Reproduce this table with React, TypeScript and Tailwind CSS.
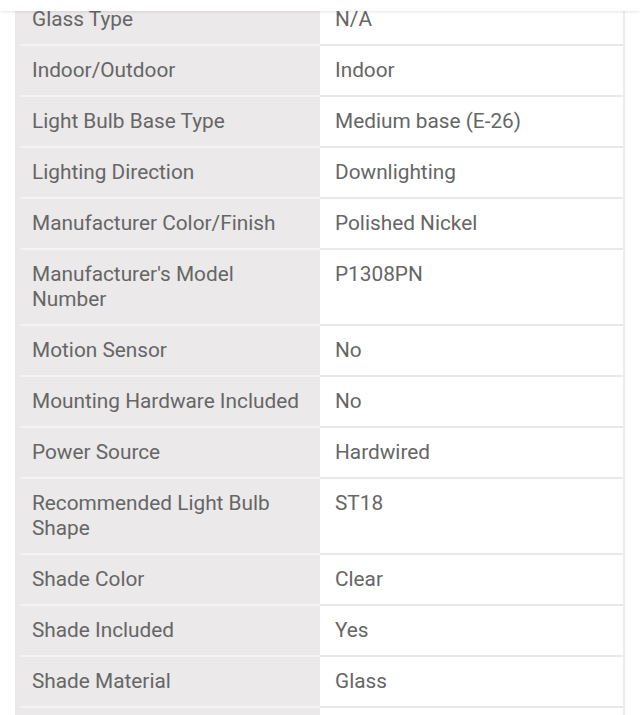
const SPECS: Array<[string, string]> = [
  ['Glass Type', 'N/A'],
  ['Indoor/Outdoor', 'Indoor'],
  ['Light Bulb Base Type', 'Medium base (E-26)'],
  ['Lighting Direction', 'Downlighting'],
  ['Manufacturer Color/Finish', 'Polished Nickel'],
  ["Manufacturer's Model Number", 'P1308PN'],
  ['Motion Sensor', 'No'],
  ['Mounting Hardware Included', 'No'],
  ['Power Source', 'Hardwired'],
  ['Recommended Light Bulb Shape', 'ST18'],
  ['Shade Color', 'Clear'],
  ['Shade Included', 'Yes'],
  ['Shade Material', 'Glass'],
  ['', ''],
]

export default function App() {
  return (
    <div className="relative h-[715px] overflow-hidden bg-white font-['Roboto','Liberation_Sans',sans-serif] text-[20.8px] leading-[25px] text-[#666666]">
      {/* top bar edge */}
      <div className="absolute inset-x-0 top-0 z-10 h-[11px] bg-white shadow-[0_1px_3px_rgba(0,0,0,0.10)]" />

      <div className="-mt-[5px] ml-[15px] w-[610px] border-r-2 border-[#ececec]">
        {SPECS.map(([label, value], i) => (
          <div key={i} className="grid grid-cols-[305px_1fr]">
            <div className="bg-[#ebe9ea] pl-[5px]">
              <div className="h-full border-b-2 border-[#f4f3f4] py-3 pl-[12px] pr-4">{label}</div>
            </div>
            <div className="border-b-2 border-[#e9e9e9] bg-white py-3 pl-[15px] pr-4">{value}</div>
          </div>
        ))}
      </div>
    </div>
  )
}
